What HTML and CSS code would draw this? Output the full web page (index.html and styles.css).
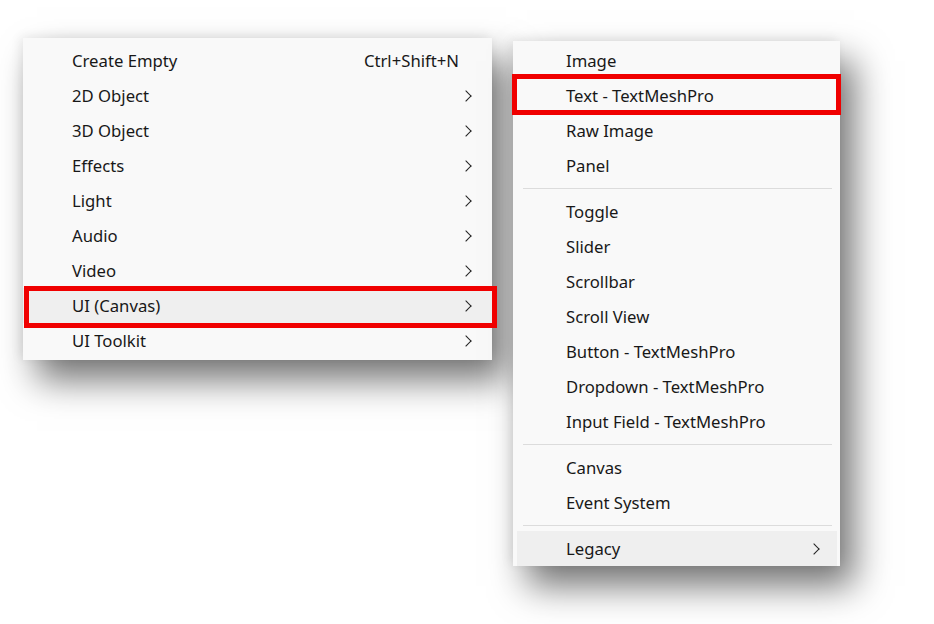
FILE: index.html
```html
<!DOCTYPE html>
<html lang="en">
<head>
    <meta charset="UTF-8">
    <title>GameObject Menu</title>
    <link rel="stylesheet" href="styles.css">
</head>
<body>
<div class="menus">
    <ul class="menu menu-main">
        <li class="item"><span>Create Empty</span><span class="shortcut">Ctrl+Shift+N</span></li>
        <li class="item sub"><span>2D Object</span></li>
        <li class="item sub"><span>3D Object</span></li>
        <li class="item sub"><span>Effects</span></li>
        <li class="item sub"><span>Light</span></li>
        <li class="item sub"><span>Audio</span></li>
        <li class="item sub"><span>Video</span></li>
        <li class="item sub active marked"><span>UI (Canvas)</span></li>
        <li class="item sub"><span>UI Toolkit</span></li>
    </ul>

    <ul class="menu menu-ui">
        <li class="item"><span>Image</span></li>
        <li class="item marked"><span>Text - TextMeshPro</span></li>
        <li class="item"><span>Raw Image</span></li>
        <li class="item"><span>Panel</span></li>
        <li class="separator"></li>
        <li class="item"><span>Toggle</span></li>
        <li class="item"><span>Slider</span></li>
        <li class="item"><span>Scrollbar</span></li>
        <li class="item"><span>Scroll View</span></li>
        <li class="item"><span>Button - TextMeshPro</span></li>
        <li class="item"><span>Dropdown - TextMeshPro</span></li>
        <li class="item"><span>Input Field - TextMeshPro</span></li>
        <li class="separator"></li>
        <li class="item"><span>Canvas</span></li>
        <li class="item"><span>Event System</span></li>
        <li class="separator"></li>
        <li class="item sub active"><span>Legacy</span></li>
    </ul>
</div>
</body>
</html>
```

FILE: styles.css
```css
* {
    box-sizing: border-box;
}
body {
    margin: 0;
    min-height: 100vh;
    background: #ffffff;
    font-family: "Noto Sans", "Open Sans", sans-serif;
    font-size: 16.7px;
    color: #181818;
}
.menus {
    display: flex;
    align-items: flex-start;
    padding: 38px 0 0 23px;
    gap: 21px;
}
.menu {
    list-style: none;
    margin: 0;
    background: #f9f9f9;
    box-shadow: 14px 20px 34px rgba(0, 0, 0, 0.55), -3px -2px 10px rgba(0, 0, 0, 0.07);
}
.menu-main {
    width: 469px;
    padding: 5px 0 2px;
}
.menu-ui {
    width: 327px;
    margin-top: 3px;
    padding: 2px 3px 0 4px;
}
.item {
    position: relative;
    display: flex;
    align-items: center;
    justify-content: space-between;
    height: 35px;
    padding: 0 33px 0 49px;
}
.menu-main .sub {
    padding-right: 22px;
}
.menu-ui .item {
    padding-left: 49px;
    padding-right: 19px;
}
.item.active {
    background: #efefef;
}
.sub::after {
    content: "";
    width: 7px;
    height: 7px;
    border-top: 1.6px solid #222;
    border-right: 1.6px solid #222;
    transform: rotate(45deg);
}
.separator {
    height: 1px;
    background: #dcdcdc;
    margin: 5px 5px 5px 6px;
}
.marked::before {
    content: "";
    position: absolute;
    border: 5px solid #f00000;
}
.menu-main .marked::before {
    left: 1px;
    right: -5px;
    top: -2px;
    bottom: -5px;
}
.menu-ui .marked::before {
    left: -5px;
    right: -4px;
    top: -4px;
    bottom: -2px;
}
```
